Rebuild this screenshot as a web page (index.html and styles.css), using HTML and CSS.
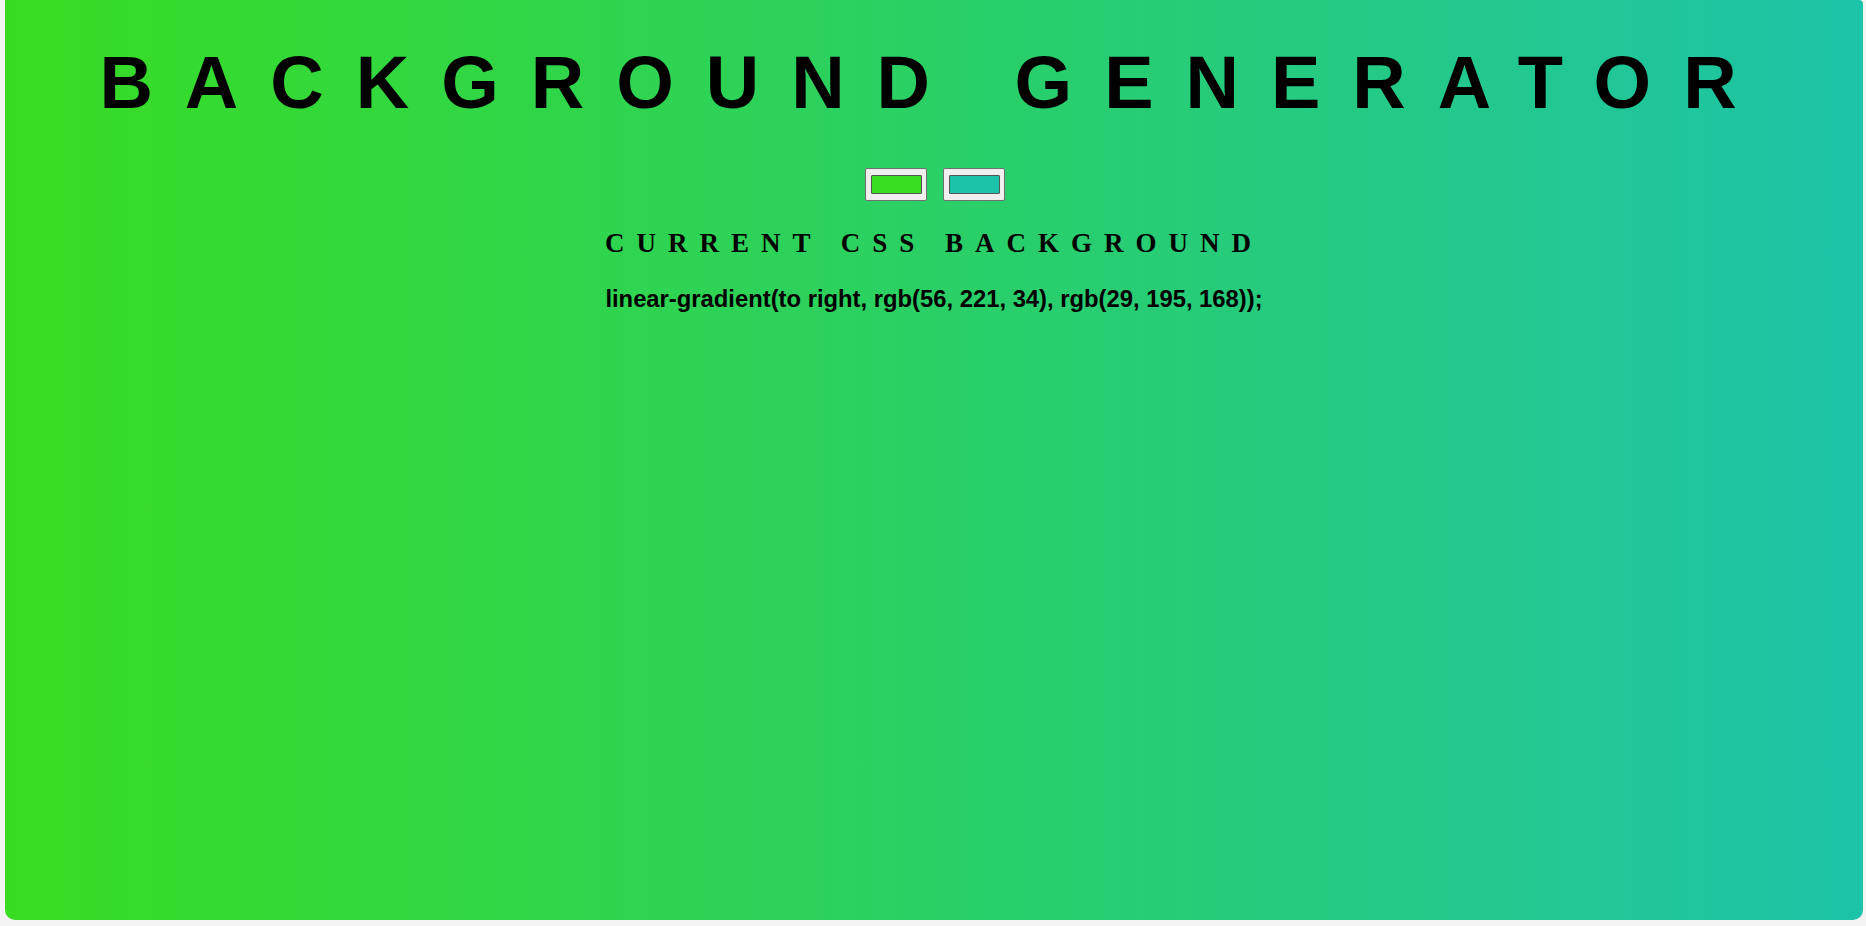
FILE: index.html
```html
<!DOCTYPE html>
<html lang="en">
<head>
<meta charset="utf-8">
<title>Background Generator</title>
<link rel="stylesheet" href="styles.css">
</head>
<body>
<div class="page">
  <h1 class="title">BACKGROUND GENERATOR</h1>
  <div class="pickers">
    <input class="picker" type="color" name="color1" value="#38dd22">
    <input class="picker" type="color" name="color2" value="#1dc3a8">
  </div>
  <h3 class="subtitle">CURRENT CSS BACKGROUND</h3>
  <p class="code">linear-gradient(to right, rgb(56, 221, 34), rgb(29, 195, 168));</p>
</div>
</body>
</html>
```
FILE: styles.css
```css
html {
  background: #f3f3f3;
}
body {
  margin: 0;
}
.page {
  margin: 0 3px 6px 5px;
  height: 920px;
  border-radius: 0 4px 10px 10px;
  background: linear-gradient(to right, rgb(56, 221, 34), rgb(29, 195, 168));
  text-align: center;
  overflow: hidden;
  color: #000;
}
.title {
  margin: 0;
  padding-top: 43px;
  font-family: "Liberation Sans", Arial, sans-serif;
  font-weight: bold;
  font-size: 74px;
  line-height: 80px;
  letter-spacing: 32px;
}
.pickers {
  display: flex;
  justify-content: center;
  gap: 16px;
  margin-top: 45px;
  padding-left: 2px;
}
.picker {
  -webkit-appearance: none;
  appearance: none;
  width: 62px;
  height: 33px;
  padding: 0;
  margin: 0;
  border: 1px solid #707070;
  border-radius: 2px;
  background: #efefef;
  box-sizing: border-box;
  cursor: pointer;
}
.picker::-webkit-color-swatch-wrapper {
  padding: 6px 4px 6px 5px;
}
.picker::-webkit-color-swatch {
  border: 1px solid #555;
  border-radius: 1px;
}
.subtitle {
  margin: 22px 0 0;
  font-family: "Liberation Serif", "Times New Roman", serif;
  font-weight: bold;
  font-size: 27px;
  line-height: 40px;
  letter-spacing: 12px;
}
.code {
  margin: 22px 0 0;
  font-family: "Liberation Sans", Arial, sans-serif;
  font-weight: bold;
  font-size: 23.8px;
  line-height: 28px;
}
```
